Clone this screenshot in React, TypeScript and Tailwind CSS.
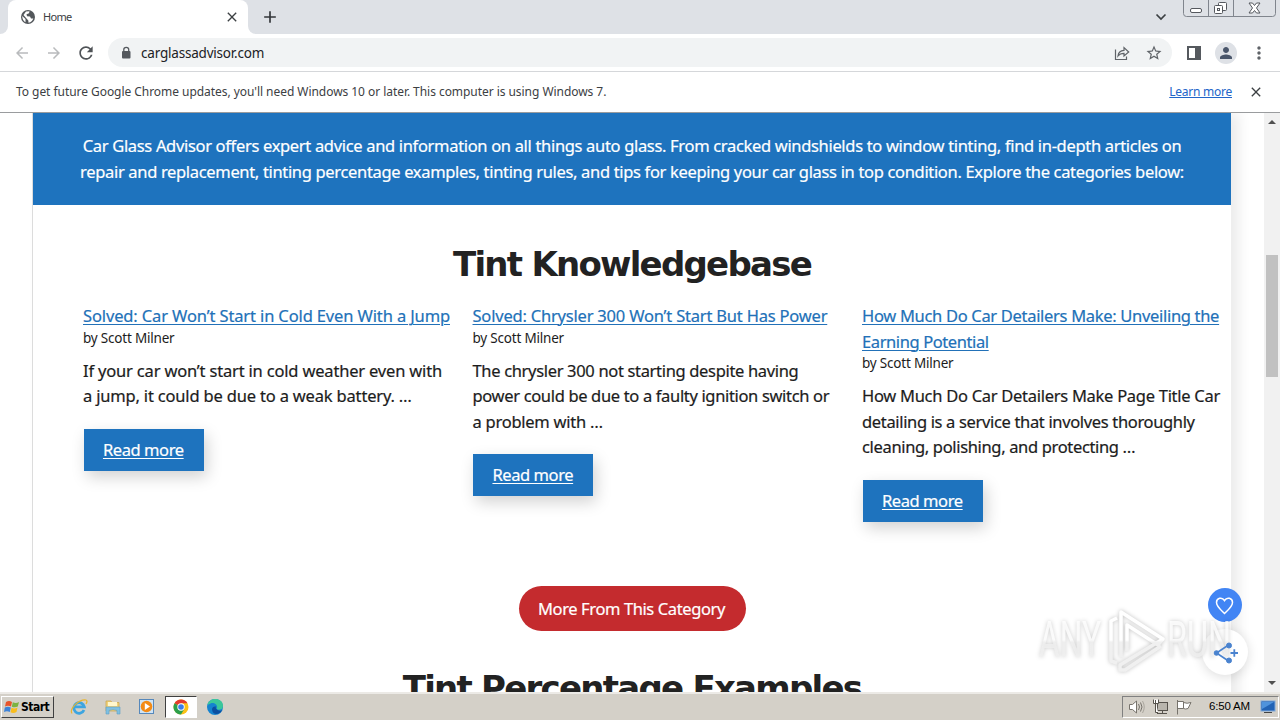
import type { ReactNode } from 'react';
import {
  MdAdd,
  MdArrowBack,
  MdArrowForward,
  MdClose,
  MdMoreVert,
  MdPerson,
  MdRefresh,
  MdStarBorder,
} from 'react-icons/md';

interface Post {
  title: { text: string; tracking: string }[];
  excerpt: { text: string; tracking: string }[];
}

const posts: Post[] = [
  {
    title: [{ text: 'Solved: Car Won’t Start in Cold Even With a Jump', tracking: 'tracking-[-0.13px]' }],
    excerpt: [
      { text: 'If your car won’t start in cold weather even with', tracking: 'tracking-[-0.18px]' },
      { text: 'a jump, it could be due to a weak battery. …', tracking: 'tracking-[-0.18px]' },
    ],
  },
  {
    title: [{ text: 'Solved: Chrysler 300 Won’t Start But Has Power', tracking: 'tracking-[-0.2px]' }],
    excerpt: [
      { text: 'The chrysler 300 not starting despite having', tracking: 'tracking-[-0.33px]' },
      { text: 'power could be due to a faulty ignition switch or', tracking: 'tracking-[-0.34px]' },
      { text: 'a problem with …', tracking: 'tracking-[-0.25px]' },
    ],
  },
  {
    title: [
      { text: 'How Much Do Car Detailers Make: Unveiling the', tracking: 'tracking-[-0.31px]' },
      { text: 'Earning Potential', tracking: 'tracking-[-0.4px]' },
    ],
    excerpt: [
      { text: 'How Much Do Car Detailers Make Page Title Car', tracking: 'tracking-[-0.28px]' },
      { text: 'detailing is a service that involves thoroughly', tracking: 'tracking-[-0.34px]' },
      { text: 'cleaning, polishing, and protecting …', tracking: 'tracking-[-0.34px]' },
    ],
  },
];

function TabStrip() {
  return (
    <div className="flex h-[34px] shrink-0 bg-[#dee1e6]">
      <div className="w-2 bg-white">
        <div className="h-full rounded-br-lg bg-[#dee1e6]" />
      </div>
      <div className="flex w-60 items-center rounded-t-lg bg-white pl-3 pr-2">
        <svg width="16" height="16" viewBox="0 0 16 16">
          <circle cx="8" cy="8" r="7" fill="#53575b" />
          <path d="M2.200 7 L5.500 10 V13.200 Q2.300 11.500 2.200 7 Z M6 2.500 L9.500 2.200 L9 4.200 L6.500 5.200 L7 7.200 L10 7.500 L11 9.500 L13.300 9.500 Q12.300 13 8.500 13.800 L8.300 11.500 L6.500 9.500 L3.500 6 Z" fill="#fff" />
        </svg>
        <span className="ml-[7px] flex-1 text-[11px] tracking-[-0.7px] text-[#3c4043]">Home</span>
        <MdClose className="h-4 w-4 text-[#3c4043]" stroke="currentColor" />
      </div>
      <div className="w-2 bg-white">
        <div className="h-full rounded-bl-lg bg-[#dee1e6]" />
      </div>
      <div className="flex flex-1 items-center pl-1">
        <MdAdd className="h-[20px] w-[20px] text-[#33363a]" />
      </div>
      <svg width="12" height="34" viewBox="0 0 12 34" className="mr-[16px]" fill="none" stroke="#3c4043" strokeWidth="1.7">
        <path d="M1.5 14.5 L6 19 L10.5 14.5" />
      </svg>
      <svg width="97" height="18" viewBox="0 0 97 18" fill="none" stroke="#80858d">
        <path d="M0.5 0 V13.5 Q0.5 16.5 3.5 16.5 H89.5 Q92.5 16.5 92.5 13.5 V0 M25.5 0 V16 M50.5 0 V16" />
        <rect x="7.5" y="8.5" width="11" height="4" rx="1.5" fill="#fff" stroke="#55585e" />
        <rect x="35.5" y="2.5" width="8" height="8" rx="1" fill="#fff" stroke="#55585e" />
        <rect x="31.5" y="5.5" width="8" height="8" rx="1" fill="#fff" stroke="#55585e" />
        <rect x="34.5" y="8.5" width="2" height="2" stroke="#55585e" />
        <path d="M66 3 H69.5 L71.5 5.5 L73.5 3 H77 L73.5 8 L77 13 H73.5 L71.5 10.5 L69.5 13 H66 L69.5 8 Z" fill="#fff" stroke="#55585e" />
      </svg>
    </div>
  );
}

function Toolbar() {
  return (
    <div className="flex h-[38px] shrink-0 items-center border-b border-[#d5d7da] bg-white pl-[13px] text-[#5f6368]">
      <MdArrowBack className="h-[18px] w-[18px] text-[#b9bbbd]" />
      <MdArrowForward className="ml-[14px] h-[18px] w-[18px] text-[#b9bbbd]" />
      <MdRefresh className="ml-[13px] h-5 w-5 text-[#4f5357]" />
      <div className="ml-3 flex h-[29px] w-[1064px] items-center rounded-full bg-[#f1f3f4] pl-[11px] pr-[9px]">
        <svg width="14" height="14" viewBox="0 0 14 14">
          <rect x="3" y="5" width="8.500" height="7.500" rx="1" fill="#55595e" />
          <path d="M4.800 5.500 V3.500 Q4.800 1.300 7.250 1.300 Q9.700 1.300 9.700 3.500 V5.500" fill="none" stroke="#55595e" strokeWidth="1.300" />
        </svg>
        <span className="ml-2 flex-1 pt-0.5 text-[13.5px] tracking-[-0.2px] text-[#202124]">carglassadvisor.com</span>
        <svg width="16" height="16" viewBox="0 0 16 16" fill="none" stroke="#5f6368" strokeWidth="1.2">
          <path d="M1.5 4.5 V14.5 H12.5 V11.5" />
          <path d="M4 11 Q4.5 5.5 10 5.3 V2.6 L14.7 7 L10 11 V8.3 Q6 8.3 4 11 Z" />
        </svg>
        <MdStarBorder className="ml-[15px] h-[18px] w-[18px]" />
      </div>
      <svg width="14" height="14" viewBox="0 0 14 14" className="ml-[15px]">
        <rect x="1" y="1" width="12" height="12" fill="none" stroke="#55595e" strokeWidth="2" />
        <rect x="8" y="1" width="5" height="12" fill="#55595e" />
      </svg>
      <div className="ml-[14px] flex h-[22px] w-[22px] items-center justify-center rounded-full bg-[#dee1e6]">
        <MdPerson className="h-[18px] w-[18px] text-[#4a566b]" />
      </div>
      <MdMoreVert className="ml-3 h-5 w-5" />
    </div>
  );
}

function UpdateNotice() {
  return (
    <div className="flex h-10 shrink-0 items-center bg-white pl-4 pr-4 text-xs text-[#3c4043]">
      <span className="flex-1 tracking-[-0.05px]">
        To get future Google Chrome updates, you'll need Windows 10 or later. This computer is using Windows 7.
      </span>
      <a className="tracking-[-0.25px] text-[#2265c9] underline underline-offset-1">Learn more</a>
      <MdClose className="ml-4 h-4 w-4" stroke="currentColor" />
    </div>
  );
}

function PostCard({ post }: { post: Post }) {
  return (
    <article className="w-[389.5px] shrink-0">
      <h3 className="text-[#2271b8]">
        {post.title.map((line) => (
          <a key={line.text} className={`block whitespace-nowrap underline decoration-1 underline-offset-2 ${line.tracking}`}>
            {line.text}
          </a>
        ))}
      </h3>
      <p className="text-[13.5px] leading-[19px] tracking-[-0.2px] [-webkit-text-stroke:0]">by Scott Milner</p>
      <div className="mt-[10px]">
        {post.excerpt.map((line) => (
          <p key={line.text} className={`whitespace-nowrap ${line.tracking}`}>
            {line.text}
          </p>
        ))}
      </div>
      <a className="mt-5 ml-[0.8px] flex h-[42px] w-[120px] items-center justify-center bg-[#1e73be] pr-px tracking-[-0.42px] text-white underline decoration-1 underline-offset-2 shadow-[3px_6px_16px_rgba(0,0,0,0.18)]">
        Read more
      </a>
    </article>
  );
}

function SectionTitle({ children }: { children: ReactNode }) {
  return (
    <h2 className="text-center font-['DejaVu_Sans',sans-serif] text-[34px] leading-[46px] font-bold tracking-[-1.75px] whitespace-nowrap text-[#222] [-webkit-text-stroke:0]">
      {children}
    </h2>
  );
}

function Scrollbar() {
  return (
    <div className="flex w-4 shrink-0 flex-col items-center bg-[#f1f1f1]">
      <svg width="16" height="17" viewBox="0 0 16 17" fill="#505050">
        <path d="M4 11 L8 7 L12 11 Z" />
      </svg>
      <div className="mt-[125px] h-[122px] w-3 bg-[#c1c1c1]" />
      <svg width="16" height="17" viewBox="0 0 16 17" className="mt-auto" fill="#505050">
        <path d="M4 6 L8 10 L12 6 Z" />
      </svg>
    </div>
  );
}

function PageContent() {
  return (
    <div className="relative flex min-h-0 flex-1 overflow-hidden border-t border-[#9a9c9e] bg-white">
      <div className="min-w-0 flex-1 pl-8">
        <div className="h-[700px] w-[1199px] border-l border-[#dcdcdc] text-[16.5px] leading-[25.5px] text-[#1c1c1c] shadow-[8px_0_12px_rgba(0,0,0,0.08)] [-webkit-text-stroke:0.2px]">
          <div className="h-[92px] bg-[#1e73be] pt-5 text-center whitespace-nowrap text-white">
            <p className="tracking-[-0.325px]">
              Car Glass Advisor offers expert advice and information on all things auto glass. From cracked windshields to window tinting, find in-depth articles on
            </p>
            <p className="tracking-[-0.33px]">
              repair and replacement, tinting percentage examples, tinting rules, and tips for keeping your car glass in top condition. Explore the categories below:
            </p>
          </div>
          <div className="pt-9">
            <SectionTitle>Tint Knowledgebase</SectionTitle>
          </div>
          <div className="mt-4 flex h-[283px] pl-[50px]">
            {posts.map((post) => (
              <PostCard key={post.title[0].text} post={post} />
            ))}
          </div>
          <div className="flex justify-center">
            <button className="h-[45px] w-[227px] rounded-full bg-[#c42b2e] pr-px tracking-[-0.39px] text-white">
              More From This Category
            </button>
          </div>
          <div className="pt-[34px]">
            <SectionTitle>Tint Percentage Examples</SectionTitle>
          </div>
        </div>
      </div>
      <Scrollbar />
      <FloatingActions />
    </div>
  );
}

function FloatingActions() {
  return (
    <>
      <div className="absolute top-[475px] left-[1208px] flex h-[34px] w-[34px] items-center justify-center rounded-full bg-[#4285f4]">
        <svg width="20" height="20" viewBox="0 0 20 20" fill="none" stroke="#fff" strokeWidth="1.5">
          <path d="M9.500 18.500 C6 15 1.500 11.500 1.500 7.500 C1.500 3 7 1.500 9.500 5.500 C12 1.500 17.500 3 17.500 7.500 C17.500 11.500 13 15 9.500 18.500 Z" />
        </svg>
      </div>
      <div className="absolute top-[516px] left-[1202px] flex h-[46px] w-[46px] items-center justify-center rounded-full bg-white shadow-[0_2px_12px_rgba(0,0,0,0.14)]" />
      <svg width="204" height="74" viewBox="0 0 204 74" className="absolute top-[490px] left-[1034px] drop-shadow-[0_0_2px_rgba(0,0,0,0.25)]">
        <defs>
          <linearGradient id="mark" x1="0" y1="0" x2="0" y2="74" gradientUnits="userSpaceOnUse">
            <stop offset="0.5" stopColor="#ffffff" />
            <stop offset="0.53" stopColor="#f0f0f0" />
          </linearGradient>
        </defs>
        <g fill="url(#mark)" fillOpacity="0.8" fontFamily="Roboto, sans-serif" fontSize="50">
          <text x="5" y="54" textLength="62" lengthAdjust="spacingAndGlyphs">ANY</text>
          <text x="133" y="54" textLength="64" lengthAdjust="spacingAndGlyphs">RUN</text>
        </g>
        <g fill="none" stroke="url(#mark)" strokeWidth="3.500" strokeLinejoin="round">
          <path d="M83 15 L77 18 V58 L83 60" />
          <path d="M87 54 V9 L129 36 L124 42 L93 22 V48" />
          <path d="M129 36 L86 62 V67 L91 67 L127 43" />
        </g>
      </svg>
      <svg width="28" height="24" viewBox="0 0 28 24" fill="#4a83cf" stroke="#4a83cf" className="absolute top-[528px] left-[1212px]">
        <path d="M16.500 4 L4.500 12 L16.500 20" fill="none" strokeWidth="1.600" />
        <circle cx="4.500" cy="12" r="2.300" />
        <circle cx="17" cy="4.500" r="2.500" />
        <circle cx="17" cy="19.500" r="2.500" />
        <path d="M18.500 12 H26 M22.300 8.300 V15.700" strokeWidth="1.800" />
      </svg>
    </>
  );
}

function Taskbar() {
  return (
    <div className="flex h-7 shrink-0 items-center border-t-2 border-[#eceae6] bg-[#d4d0c8] font-['Liberation_Sans',sans-serif] text-[11px] text-black">
      <div className="ml-px flex h-[22px] w-[53px] items-center border border-t-white border-r-[#404040] border-b-[#404040] border-l-white pl-0.5 font-['DejaVu_Sans_Condensed','DejaVu_Sans',sans-serif] text-[12px] font-bold tracking-[-0.5px]">
        <svg width="16" height="16" viewBox="0 0 16 16" className="mr-px shrink-0">
          <path d="M2 3 Q5 1 8 3 L7 7.500 Q4 6 1 7.500 Z" fill="#e8552b" />
          <path d="M8.800 3.300 Q12 5 15 3 L13.800 7.600 Q11 9 7.800 7.800 Z" fill="#7cb342" />
          <path d="M0.800 8.500 Q4 7 6.800 8.500 L5.800 13 Q3 11.500 0 13 Z" fill="#3d83d8" />
          <path d="M7.500 8.800 Q10.500 10.200 13.500 8.600 L12.500 13 Q9.500 15 6.500 13.300 Z" fill="#f9bd1c" />
        </svg>
        Start
      </div>
      <svg width="18" height="18" viewBox="0 0 18 18" className="ml-4" fill="none">
        <path d="M14 12 A5.300 5.300 0 1 1 14.300 8.900 H5" stroke="#3da5e0" strokeWidth="2.800" />
        <path d="M2 15.500 C-1 11 9 1 16 2 C17.500 2.500 17 4.500 16 6" stroke="#e9b52d" strokeWidth="1.200" />
      </svg>
      <svg width="18" height="18" viewBox="0 0 18 18" className="ml-4">
        <path d="M2 3 H7 L8 4.500 H15 V13 H2 Z" fill="#f0d27a" stroke="#c7a54a" strokeWidth="0.700" />
        <path d="M4 4 H13 V8 H4 Z" fill="#fff7cd" />
        <path d="M2 9 H16 V16 H13 V12.500 Q9 10.500 5 12.500 V16 H2 Z" fill="#7fc0e2" stroke="#5b9fc8" strokeWidth="0.600" />
      </svg>
      <svg width="18" height="18" viewBox="0 0 18 18" className="ml-4">
        <rect x="1.500" y="1.500" width="14" height="14" fill="#cfe4f5" stroke="#5688bb" />
        <circle cx="8.500" cy="8.500" r="5.800" fill="#f38b16" />
        <path d="M6.800 5 L12 8.500 L6.800 12 Z" fill="#fff" />
      </svg>
      <div className="ml-[9px] flex h-[22px] w-8 items-center justify-center border border-t-[#404040] border-r-white border-b-white border-l-[#404040] bg-white">
        <svg width="16" height="16" viewBox="0 0 16 16">
          <circle cx="8" cy="8" r="7.500" fill="#fbc116" />
          <path d="M8 8 L1.500 4.250 A7.500 7.500 0 0 1 14.500 4.250 H8 Z" fill="#e33b2e" />
          <path d="M8 8 L1.500 4.250 A7.500 7.500 0 0 0 8 15.500 L11.250 9.900 Z" fill="#2b9f4b" />
          <circle cx="8" cy="8" r="3.700" fill="#fff" />
          <circle cx="8" cy="8" r="2.800" fill="#3a7de9" />
        </svg>
      </div>
      <svg width="18" height="18" viewBox="0 0 18 18" className="ml-[9px]">
        <circle cx="9" cy="9" r="8" fill="#1583cf" />
        <path d="M1.500 7 C3 -1 17 -1 17 8 C17 12 12 12.500 10.500 11 C12.500 8 9.500 4.500 5.500 5 Z" fill="#3bc79a" />
        <path d="M10.500 11 C12 13 15 13 16.500 12 C13 18 6.500 17 6 11.500 C6 9 8 8 10 8.500 C9.500 9.500 9.800 10.500 10.500 11 Z" fill="#0b4fa0" />
      </svg>
      <div className="mr-px ml-auto flex h-[22px] w-[157px] items-center border border-t-[#808080] border-r-white border-b-white border-l-[#808080] pl-[5px]">
        <svg width="18" height="16" viewBox="0 0 18 16" fill="none" stroke="#77736c">
          <path d="M1.500 5.500 H4.500 L8.500 2 V14 L4.500 10.500 H1.500 Z" fill="#fff" />
          <path d="M10.500 5 Q12.500 8 10.500 11 M12.500 3.500 Q15.500 8 12.500 12.500" />
          <path d="M14.500 2 Q18 8 14.500 14" stroke="#aaa69e" />
        </svg>
        <svg width="18" height="16" viewBox="0 0 18 16" className="ml-[6px]" stroke="#56524c">
          <rect x="5.500" y="3.500" width="10" height="8" fill="#b9b5ad" />
          <path d="M5 14.500 H15 M10.500 12 V14" />
          <path d="M1.500 0.500 V4.500 H6.500 V0.500 M3.500 1 V13.500 H6" fill="#fff" />
        </svg>
        <svg width="18" height="16" viewBox="0 0 18 16" className="ml-[5px]" fill="#fff" stroke="#77736c">
          <path d="M2.500 1 V15.500 M2.500 2.500 H8.500 V9.500 H2.500 M8.500 3.500 Q12 5 16 3.500 L13 9.500 Q10.500 10.500 8.500 9.500" />
        </svg>
        <span className="ml-4 text-[11.5px] tracking-[-0.2px] whitespace-nowrap">6:50 AM</span>
        <svg width="17" height="14" viewBox="0 0 17 14" className="mr-px ml-auto">
          <rect x="1" y="1" width="14" height="10" fill="#2263b5" stroke="#7fa8d8" />
          <path d="M2 2 H14 L2 9 Z" fill="#4f93dc" />
          <path d="M4 12.500 H12" stroke="#444" />
        </svg>
      </div>
    </div>
  );
}

export default function App() {
  return (
    <div className="flex h-[720px] w-[1280px] flex-col overflow-hidden font-['Noto_Sans',sans-serif]">
      <TabStrip />
      <Toolbar />
      <UpdateNotice />
      <PageContent />
      <Taskbar />
    </div>
  );
}
